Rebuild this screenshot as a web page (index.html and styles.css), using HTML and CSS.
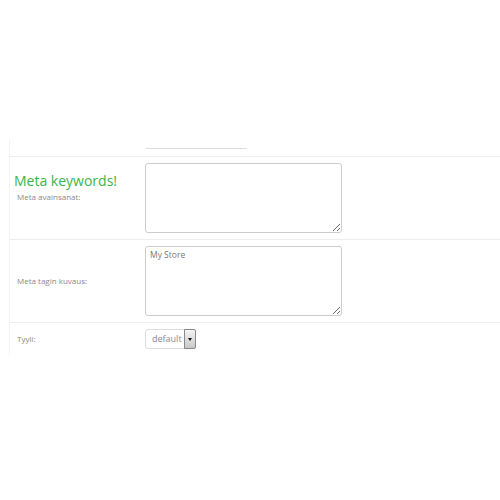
FILE: index.html
```html
<!DOCTYPE html>
<html>
<head>
<meta charset="utf-8">
<link rel="stylesheet" href="styles.css">
</head>
<body>
<div class="form">
  <div class="row top">
    <div class="label"></div>
    <div class="field"><div class="topinput"></div></div>
  </div>
  <div class="row">
    <div class="label">
      <div class="title">Meta keywords!</div>
      <div class="sub">Meta avainsanat:</div>
    </div>
    <div class="field"><textarea class="ta"></textarea></div>
  </div>
  <div class="row">
    <div class="label center">Meta tagin kuvaus:</div>
    <div class="field"><textarea class="ta">My Store</textarea></div>
  </div>
  <div class="row">
    <div class="label center">Tyyli:</div>
    <div class="field">
      <div class="select"><span class="val">default</span><span class="btn"><span class="tri"></span></span></div>
    </div>
  </div>
</div>
</body>
</html>
```
FILE: styles.css
```css
html, body { margin: 0; padding: 0; background: #fff; }
body { font-family: "Open Sans", "Liberation Sans", sans-serif; color: #777; }
.form { margin: 139px 0 0 9px; border-left: 1px solid #f3f3f3; }
.row { display: flex; border-top: 1px solid #eee; padding: 6px 0; }
.row.top { border-top: none; padding: 0 0 7px 0; }
.topinput { width: 101px; height: 0; border-bottom: 1px solid #ddd; margin: 9px 0 0 1px; }
.label { width: 135px; font-size: 8px; color: #888; box-sizing: border-box; padding-left: 4px; }
.label.center { display: flex; align-items: center; padding-left: 7px; padding-bottom: 2px; }
.title { font-size: 14px; color: #3bb54a; margin-top: 8px; line-height: 20px; }
.sub { font-size: 8px; padding-left: 3px; margin-top: 0; }
.field { flex: 1; }
.ta { display: block; width: 197px; height: 70px; box-sizing: border-box; border: 1px solid #ccc; border-radius: 3px; font-family: "Open Sans", "Liberation Sans", sans-serif; font-size: 8.5px; color: #777; padding: 2px 4px; resize: both; margin: 0; }
.select { display: flex; width: 51px; height: 20px; box-sizing: border-box; border: 1px solid #ddd; border-radius: 3px; align-items: stretch; }
.val { flex: 1; font-size: 9px; color: #888; padding-left: 6px; line-height: 17px; }
.btn { width: 10px; background: linear-gradient(#f4f4f4, #c8c8c8); display: flex; align-items: center; justify-content: center; border: 1px solid #888; margin: -1px -1px -1px 0; border-radius: 0 2px 2px 0; }
.tri { width: 0; height: 0; border-left: 2.5px solid transparent; border-right: 2.5px solid transparent; border-top: 3px solid #111; }
```
